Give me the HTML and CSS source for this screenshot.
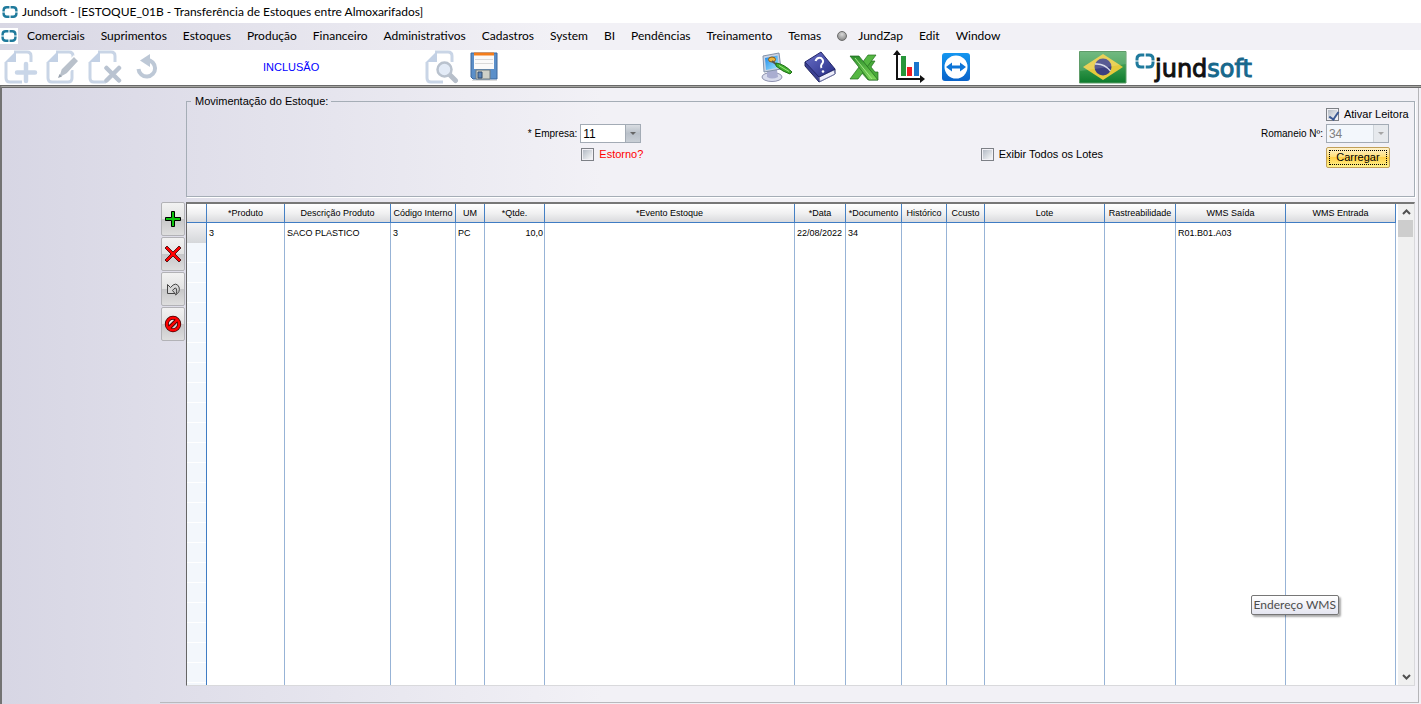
FILE: index.html
```html
<!DOCTYPE html>
<html lang="pt-BR">
<head>
<meta charset="utf-8">
<title>Jundsoft - [ESTOQUE_01B - Transferência de Estoques entre Almoxarifados]</title>
<link rel="stylesheet" href="styles.css">
</head>
<body>
<svg class="defs" width="0" height="0" aria-hidden="true">
  <defs>
    <symbol id="ring" viewBox="0 0 20 16">
      <g fill="none" stroke="#1f7a9c" stroke-width="3">
        <path d="M9.300 2H6Q2 2 2 6V7.500"/><path d="M10.700 2H14Q18 2 18 6V7.500"/>
        <path d="M9.300 14H6Q2 14 2 10V8.500"/><path d="M10.700 14H14Q18 14 18 10V8.500"/>
      </g>
    </symbol>
    <symbol id="page" viewBox="0 0 34 34">
      <path d="M10 2H23Q27 2 27 6V12M2 12V28Q2 32 6 32H18" fill="none" stroke="#c9d5e6" stroke-width="3"/>
      <path d="M1 12L12 1V12Z" fill="#c3d1e5"/>
    </symbol>
    <linearGradient id="gFlag" x1="0" y1="0" x2="0" y2="1"><stop offset="0" stop-color="#5aae6b"/><stop offset=".5" stop-color="#38994d"/><stop offset="1" stop-color="#0c7a2c"/></linearGradient>
    <linearGradient id="gBook" x1="0" y1="0" x2="1" y2="1"><stop offset="0" stop-color="#6a70c8"/><stop offset="1" stop-color="#272d86"/></linearGradient>
    <linearGradient id="gScreen" x1="0" y1="0" x2="1" y2="1"><stop offset="0" stop-color="#1c86e8"/><stop offset="1" stop-color="#a5ecff"/></linearGradient>
    <linearGradient id="gX" x1="0" y1="0" x2="0" y2="1"><stop offset="0" stop-color="#2c8f2c"/><stop offset="1" stop-color="#7fd95a"/></linearGradient>
    <linearGradient id="gTv" x1="0" y1="0" x2="0" y2="1"><stop offset="0" stop-color="#1496f0"/><stop offset="1" stop-color="#0a63c9"/></linearGradient>
  </defs>
</svg>

<header class="titlebar">
  <svg class="app-icon" viewBox="0 0 20 16"><use href="#ring"/></svg>
  <span>Jundsoft - [ESTOQUE_01B - Transferência de Estoques entre Almoxarifados]</span>
</header>

<nav class="menubar">
  <span class="doc-icon"><svg class="app-icon" viewBox="0 0 20 16"><use href="#ring"/></svg></span>
  <button>Comerciais</button>
  <button>Suprimentos</button>
  <button>Estoques</button>
  <button>Produção</button>
  <button>Financeiro</button>
  <button>Administrativos</button>
  <button>Cadastros</button>
  <button>System</button>
  <button>BI</button>
  <button>Pendências</button>
  <button>Treinamento</button>
  <button>Temas</button>
  <button class="zap"><span class="dot"></span>JundZap</button>
  <button>Edit</button>
  <button>Window</button>
</nav>

<div class="toolbar">
  <div class="tools record">
    <button aria-label="Novo"><svg width="34" height="34" viewBox="0 0 34 34"><use href="#page"/><path d="M22 12V33M11 22.500H33" stroke="#fff" stroke-width="8"/><path d="M22 14V31M13 22.500H31" stroke="#c9d6e8" stroke-width="4.500" stroke-linecap="round"/></svg></button>
    <button aria-label="Editar"><svg width="34" height="34" viewBox="0 0 34 34"><use href="#page"/><path d="M18 32H22Q26 32 26 28V20" fill="none" stroke="#c9d5e6" stroke-width="3"/><path d="M12 29L15 19L28 6L33 11L21 24Z" fill="#b9c1cb" stroke="#fff" stroke-width="1.500"/><path d="M12 28L13.500 24L16 26.500Z" fill="#98a2ae"/></svg></button>
    <button aria-label="Excluir"><svg width="34" height="34" viewBox="0 0 34 34"><use href="#page"/><path d="M18 18L32 31M32 18L18 31" stroke="#fff" stroke-width="8"/><path d="M18.500 18L31 30.500M31 18L18.500 30.500" stroke="#b9c3d1" stroke-width="4.500" stroke-linecap="round"/></svg></button>
    <button aria-label="Desfazer"><svg width="34" height="34" viewBox="0 0 34 34"><path d="M8.500 19A8.300 8.300 0 1 0 17 10" fill="none" stroke="#bdc8d6" stroke-width="4"/><path d="M10 10.500L20 4V17Z" fill="#bdc8d6"/></svg></button>
  </div>
  <span class="mode">INCLUSÃO</span>
  <div class="tools search">
    <button aria-label="Pesquisar"><svg width="34" height="34" viewBox="0 0 34 34"><use href="#page"/><circle cx="19.500" cy="19.500" r="10" fill="#fff"/><path d="M25 25L30.500 30.500" stroke="#b7bfca" stroke-width="5" stroke-linecap="round"/><circle cx="19.500" cy="19.500" r="7" fill="#e3ebf7" stroke="#b9c2ce" stroke-width="2.500"/></svg></button>
    <button aria-label="Salvar"><svg width="30" height="34" viewBox="0 0 30 34"><path d="M2 3H28V29H4L2 27Z" fill="#5b8fc9" stroke="#3c669c"/><path d="M5 3H25V19H5Z" fill="#fafafa"/><path d="M5 2.500H25V5.500H5Z" fill="#f47d1a"/><path d="M6 9.500H24M6 13.500H24" stroke="#d9d9d9"/><path d="M3 30.500H28" stroke="#ddd"/><path d="M7 20H21V29H7Z" fill="#cfd0c8" stroke="#6e7a80"/><path d="M9 22H13V28H9Z" fill="#5b86bb" stroke="#304c70"/></svg></button>
  </div>
  <div class="tools apps">
    <button aria-label="Aparência"><svg width="34" height="34" viewBox="0 0 34 34"><ellipse cx="12" cy="27" rx="10" ry="4.500" fill="#d9dced" stroke="#8d91ad"/><path d="M7 20H17L18 27Q12 30 7 27Z" fill="#a9add0"/><path d="M3 6L19 3L21 19L4 22Z" fill="#c9d3e4" stroke="#8392a9"/><path d="M5 8L17.500 5.500L19 17.500L6 20Z" fill="url(#gScreen)"/><ellipse cx="12" cy="9.500" rx="3.500" ry="2.500" fill="#eeb53c" stroke="#8b5a12"/><path d="M12 11L17 15" stroke="#555" stroke-width="2"/><path d="M16 13Q24 14 32 22L30 24Q23 22 16 16Z" fill="#3fae2d" stroke="#1f6f16"/><path d="M19 15.500L29 21.500" stroke="#9be77d"/></svg></button>
    <button aria-label="Ajuda"><svg width="34" height="34" viewBox="0 0 34 34"><path d="M1 12V16L15 32L31 24V19Z" fill="#3b4092" stroke="#22265f"/><path d="M15 27L30 20L31 24L16 31.500Z" fill="#eeeefb" stroke="#777da8"/><path d="M1 12L17 2L31 19L15 27Z" fill="url(#gBook)" stroke="#23276b"/><path d="M11.500 11Q13 7 17 8Q21 11 17.500 14.500Q16.500 16 17.500 18" fill="none" stroke="#fff" stroke-width="2"/><circle cx="19" cy="21.500" r="1.300" fill="#fff"/></svg></button>
    <button aria-label="Excel"><svg width="34" height="34" viewBox="0 0 34 34"><path d="M17 11H27L23 17L27 22H30V30H20L13 22Z" fill="#49ab3a" stroke="#246f1f" stroke-width=".7"/><path d="M20 5H28L10 29H2Z" fill="#55b743" stroke="#236f1e" stroke-width=".7"/><path d="M2 6H11L30 30H21Z" fill="url(#gX)" stroke="#1e691c" stroke-width=".7"/><path d="M7 8L24 29" stroke="#a6e88a"/></svg></button>
    <button aria-label="Gráficos"><svg width="34" height="34" viewBox="0 0 34 34"><path d="M9 6H14V26H9Z" fill="#27963a"/><path d="M15 17H20V26H15Z" fill="#ed1c24"/><path d="M22 12H27V26H22Z" fill="#1b75cc"/><path d="M5 3V29H30" fill="none" stroke="#111" stroke-width="2"/><path d="M1 5L5 0L9 5ZM28 25L33 29L28 33Z" fill="#111"/></svg></button>
    <button aria-label="TeamViewer"><svg width="34" height="34" viewBox="0 0 34 34"><rect x="6" y="3" width="28" height="28" rx="3" fill="url(#gTv)"/><circle cx="20" cy="17" r="11.500" fill="#fff"/><path d="M10 17L16 12.500V15.500H24V12.500L30 17L24 21.500V18.500H16V21.500Z" fill="#0e75d8"/></svg></button>
  </div>
  <svg class="flag" width="48" height="34" viewBox="0 0 48 34"><path d="M.5 1.500H47V33H.5Z" fill="url(#gFlag)" stroke="#5f9c69"/><path d="M4 17L24 4L44 17L24 30Z" fill="#e5c93c"/><circle cx="24" cy="17" r="8.500" fill="#3b3f80"/><path d="M16 14Q25 13 31.500 21" fill="none" stroke="#d4d8e8" stroke-width="1.500"/><path d="M1 2H47V14Q24 18 1 21Z" fill="#fff" opacity=".15"/></svg>
  <div class="brand"><svg width="20" height="18" viewBox="0 0 20 16"><use href="#ring"/></svg><span class="word">jund<b>soft</b></span></div>
</div>

<main class="workspace">
  <section class="panel">
    <fieldset class="box">
      <legend>Movimentação do Estoque:</legend>
      <div class="fields">
        <label class="check ativar"><input type="checkbox" checked>Ativar Leitora</label>
        <label class="lbl empresa" for="empresa">* Empresa:</label>
        <span class="combo c-empresa"><select id="empresa"><option>11</option></select></span>
        <label class="lbl romaneio" for="romaneio">Romaneio Nº:</label>
        <span class="combo off c-romaneio"><select id="romaneio" disabled><option>34</option></select></span>
        <label class="check estorno"><input type="checkbox">Estorno?</label>
        <label class="check exibir"><input type="checkbox">Exibir Todos os Lotes</label>
        <button class="load">Carregar</button>
      </div>
    </fieldset>

    <div class="lower">
      <div class="side">
        <button aria-label="Adicionar linha"><svg width="18" height="18" viewBox="0 0 18 18"><path d="M7.500 1.500H10.500V7.500H16.500V10.500H10.500V16.500H7.500V10.500H1.500V7.500H7.500Z" fill="#0dc20d" stroke="#000"/></svg></button>
        <button aria-label="Remover linha"><svg width="18" height="18" viewBox="0 0 18 18"><path d="M3 1L9 7L15 1L17 3L11 9L17 15L15 17L9 11L3 17L1 15L7 9L1 3Z" fill="#f00" stroke="#300" stroke-width=".8"/></svg></button>
        <button aria-label="Desfazer linha"><svg width="18" height="18" viewBox="0 0 18 18"><path d="M3.500 4.500V13.500H11L8.500 10.500Q11.500 6.500 12.500 9Q13.500 12 11.500 15Q16.500 12 15 7Q12 1 6.500 7.500Z" fill="#d8d8d8" stroke="#444"/></svg></button>
        <button aria-label="Cancelar"><svg width="18" height="18" viewBox="0 0 18 18"><circle cx="9" cy="9" r="6.200" fill="none" stroke="#400" stroke-width="4"/><path d="M5 13L13 5" stroke="#400" stroke-width="4"/><circle cx="9" cy="9" r="6.200" fill="none" stroke="#f00" stroke-width="2.400"/><path d="M5 13L13 5" stroke="#f00" stroke-width="2.400"/></svg></button>
      </div>
      <div class="grid">
        <table>
          <colgroup><col class="w20"><col class="w78"><col class="w106"><col class="w65"><col class="w29"><col class="w60"><col class="w250"><col class="w51"><col class="w56"><col class="w45"><col class="w38"><col class="w120"><col class="w71"><col class="w110"><col class="w110"></colgroup>
          <thead><tr><th></th><th>*Produto</th><th>Descrição Produto</th><th>Código Interno</th><th>UM</th><th>*Qtde.</th><th>*Evento Estoque</th><th>*Data</th><th>*Documento</th><th>Histórico</th><th>Ccusto</th><th>Lote</th><th>Rastreabilidade</th><th>WMS Saída</th><th>WMS Entrada</th></tr></thead>
          <tbody>
            <tr><td class="sel"></td><td>3</td><td>SACO PLASTICO</td><td>3</td><td>PC</td><td class="num">10,0</td><td></td><td>22/08/2022</td><td>34</td><td></td><td></td><td></td><td></td><td>R01.B01.A03</td><td></td></tr>
            <tr class="fill"><td></td><td></td><td></td><td></td><td></td><td></td><td></td><td></td><td></td><td></td><td></td><td></td><td></td><td></td><td></td></tr>
          </tbody>
        </table>
        <div class="scroll">
          <button aria-label="Rolar para cima"><svg width="9" height="6" viewBox="0 0 9 6"><path d="M1 5L4.500 1.500L8 5" fill="none" stroke="#505050" stroke-width="2"/></svg></button>
          <span class="thumb"></span>
          <button aria-label="Rolar para baixo"><svg width="9" height="6" viewBox="0 0 9 6"><path d="M1 1L4.500 4.500L8 1" fill="none" stroke="#505050" stroke-width="2"/></svg></button>
        </div>
      </div>
    </div>
  </section>
</main>
<div class="tip" role="tooltip">Endereço WMS</div>
</body>
</html>
```
FILE: styles.css
```css
* { box-sizing: border-box; }

body {
  display: flex;
  flex-direction: column;
  height: 100vh;
  margin: 0;
  overflow: hidden;
  background: #fff;
  color: #000;
  font: 11px/13px "Liberation Sans", Arial, sans-serif;
}

button { padding: 0; border: 0; background: none; color: inherit; font: inherit; }
svg { display: block; }
.defs { position: absolute; }
.app-icon { width: 16px; height: 14px; }

.titlebar {
  display: flex;
  align-items: center;
  gap: 4px;
  height: 23px;
  padding-left: 2px;
  font: 12px/16px Lato, "Open Sans", sans-serif;
}

.menubar {
  display: flex;
  align-items: center;
  gap: 16px;
  height: 27px;
  padding-bottom: 2px;
  background: linear-gradient(90deg, #d8d7e4, #f2f1f6 560px);
  font: 12px/16px Lato, "Open Sans", sans-serif;
}
.doc-icon { margin-right: -7px; padding: 1px; background: #fff; }
.zap { display: flex; align-items: center; gap: 11px; }
.dot {
  width: 10px;
  height: 10px;
  border: 1px solid #6b6b6b;
  border-radius: 50%;
  background: radial-gradient(circle at 50% 30%, #d8d8d8, #7a7a7a);
}

.toolbar { display: flex; height: 36px; padding-left: 4px; border-bottom: 1px solid #696969; }
.tools { display: flex; align-items: flex-start; }
.record { gap: 8px; width: 259px; }
.mode { width: 162px; padding-top: 10px; color: #00f; line-height: 14px; }
.search { gap: 10px; width: 335px; }
.apps { gap: 10px; width: 319px; }
.flag { margin-right: 8px; }
.brand { display: flex; align-items: flex-start; padding-top: 2px; }
.word { padding-top: 3px; color: #111; font: 24px/28px "DejaVu Sans", sans-serif; -webkit-text-stroke: 1px; }
.word b { color: #17688c; font-weight: 400; }

.workspace {
  display: flex;
  flex: 1;
  min-height: 0;
  padding: 1px 2px 1px 158px;
  border-top: 1px solid #a6a6a2;
  border-left: 2px solid #737373;
  background: linear-gradient(90deg, #d7d6e4, #f2f1f6 600px);
  box-shadow: inset 0 1px #696969;
}
.panel {
  display: flex;
  flex: 1;
  flex-direction: column;
  min-width: 0;
  padding: 6px 3px 16px 0;
  border-right: 1px solid #b5b5b8;
  border-bottom: 1px solid #b9b9bd;
}

.box {
  height: 103px;
  margin: 0 0 5px 26px;
  padding: 0;
  border: 1px solid #a5adb6;
  box-shadow: 1px 1px #fff;
}
.box legend { margin-left: 4px; padding: 1px 3px 0 4px; }
.fields {
  display: grid;
  grid-template-columns: 390fr 397fr 342fr 88fr;
  grid-template-rows: 13px 20px 21px;
  gap: 3px;
}
.lbl { grid-row: 2; align-self: start; justify-self: end; padding-top: 3px; font-size: 10px; }
.empresa { grid-column: 1; }
.romaneio { grid-column: 3; }
.c-empresa { grid-area: 2 / 2; width: 61px; }
.c-romaneio { grid-area: 2 / 4; width: 63px; }
.check { display: flex; gap: 5px; align-self: start; white-space: nowrap; }
.ativar { grid-area: 1 / 4; }
.estorno { grid-area: 3 / 2; padding: 1px; color: #f00; }
.exibir { grid-area: 3 / 3; padding: 1px 0; }
.check input {
  appearance: none;
  width: 13px;
  height: 13px;
  margin: 0;
  border: 1px solid #7d8086;
  background: linear-gradient(135deg, #b4bbc5, #f6f7f8) content-box #f4f4f4;
  padding: 1px;
}
.check input:checked::after {
  content: "";
  display: block;
  width: 4px;
  height: 8px;
  margin: 0 0 0 3px;
  border: solid #3c5a94;
  border-width: 0 2px 2px 0;
  transform: rotate(35deg);
}

.combo { position: relative; display: block; height: 19px; }
.combo select {
  appearance: none;
  display: block;
  width: 100%;
  height: 100%;
  padding: 0 2px;
  border: 1px solid #a3abb5;
  border-radius: 0;
  background: #fff;
  color: #000;
  font: 12px/16px "Liberation Sans", Arial, sans-serif;
}
.combo::before {
  content: "";
  position: absolute;
  inset: 1px 1px 1px auto;
  width: 14px;
  border-left: 1px solid #a3abb5;
  background: linear-gradient(#d9dde2, #b9c0c9 50%, #c9cfd6);
}
.combo::after {
  content: "";
  position: absolute;
  top: 8px;
  right: 5px;
  border: 3px solid transparent;
  border-top-color: #666;
  border-bottom: 0;
}
.off select { background: #f3f7fc; color: #808080; opacity: 1; }
.off::before { background: #e6e9ed; border-color: #d0d5da; }
.off::after { border-top-color: #a5a5a5; }

.load {
  grid-area: 3 / 4;
  width: 64px;
  border: 1px solid #c1a058;
  border-radius: 2px;
  background: linear-gradient(#fff3cf, #ffe07c 45%, #ffd04a 50%, #fff28a);
  outline: 1px dotted #000;
  outline-offset: -4px;
}

.lower { display: flex; flex: 1; gap: 1px; min-height: 0; }
.side { display: flex; flex-direction: column; gap: 1px; width: 25px; padding-left: 1px; }
.side button {
  display: grid;
  place-items: center;
  height: 34px;
  border: 1px solid #b2b2b6;
  border-radius: 2px;
  background: linear-gradient(#f2f2f2, #e2e2e2 50%, #c6c6c8 50%, #dedede);
}

.grid {
  display: flex;
  flex: 1;
  min-width: 0;
  border: 1px solid #d9d9dc;
  border-top: 2px solid #777;
  border-left-color: #666;
  background: #fff;
}
table {
  flex: 1;
  width: 0;
  height: 100%;
  table-layout: fixed;
  border-collapse: separate;
  border-spacing: 0;
  font-size: 9px;
  line-height: 13px;
}
th, td { overflow: hidden; white-space: nowrap; }
th {
  height: 19px;
  padding: 0;
  border-right: 1px solid #4580c4;
  border-bottom: 1px solid #3f7cc4;
  background: linear-gradient(#fff, #f1f1f2 50%, #d9dadd);
  font-weight: 400;
  text-align: center;
}
td { height: 20px; padding: 0 1px 0 2px; border-right: 1px solid #97b3d6; text-align: left; }
td:first-child { border-right-color: #3f7cc4; }
.sel { background: linear-gradient(#f2f2f4, #d5d7da); }
.num { text-align: right; }
.fill td { height: auto; }
.fill td:first-child { background: repeating-linear-gradient(#f3f7fc 0 19px, #fff 19px 20px); }
.w20 { width: 20px; }
.w29 { width: 29px; }
.w38 { width: 38px; }
.w45 { width: 45px; }
.w51 { width: 51px; }
.w56 { width: 56px; }
.w60 { width: 60px; }
.w65 { width: 65px; }
.w71 { width: 71px; }
.w78 { width: 78px; }
.w106 { width: 106px; }
.w110 { width: 110px; }
.w120 { width: 120px; }
.w250 { width: 250px; }

.scroll {
  display: flex;
  flex-direction: column;
  width: 16px;
  margin-left: 2px;
  background: #f0f0f0;
}
.scroll button { display: grid; place-items: center; height: 16px; }
.thumb { height: 17px; margin: 0 1px auto 0; background: #cdcdcd; }

.tip {
  position: absolute;
  top: 595px;
  right: 82px;
  padding: 1px 2px;
  border: 1px solid #767676;
  border-radius: 2px;
  background: linear-gradient(#fff, #e4e5f0);
  box-shadow: 2px 2px 2px #0005;
  color: #4c4c4c;
  font: 12px/16px Lato, "Open Sans", sans-serif;
}
```
